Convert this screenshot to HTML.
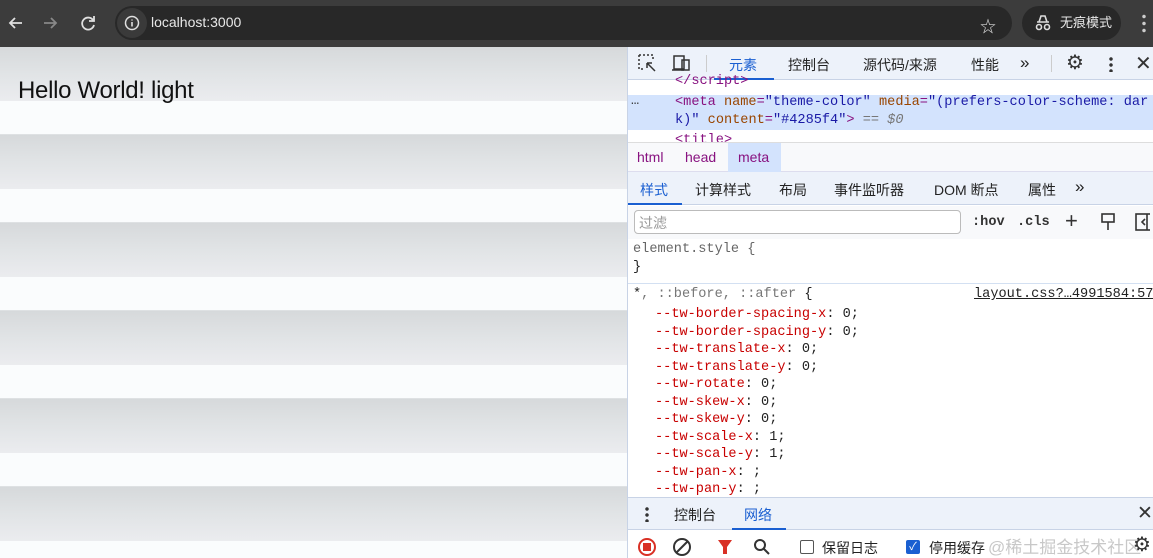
<!DOCTYPE html>
<html><head><meta charset="utf-8"><style>
*{margin:0;padding:0;box-sizing:border-box}
body{width:1153px;height:558px;overflow:hidden;position:relative;font-family:"Liberation Sans","Noto Sans CJK SC",sans-serif;background:#fff}
.abs{position:absolute}
.top{left:0;top:0;width:1153px;height:47px;background:#3c3c3c}
.addr{left:115px;top:6px;width:897px;height:34px;border-radius:17px;background:#282828}
.pill{left:1022px;top:6px;width:99px;height:34px;border-radius:17px;background:#282828;color:#e8e8e8;font-size:13px;line-height:34px;padding-left:38px}
.page{left:0;top:47px;width:627px;height:511px;background:repeating-linear-gradient(to bottom,#d6d9db 0px,#e0e3e5 25px,#ebecef 54px,#fafcfd 54px,#fafcfd 87px,#e6e8ea 87px,#d6d9db 88px)}
.dt{left:627px;top:47px;width:526px;height:511px;background:#fff;border-left:1px solid #c8d3e6}
.mono{font-family:"Liberation Mono",monospace;font-size:13.6px}
.tabbar{background:#edf2fa;}
.cn{font-size:14px;color:#222}
.code{left:655px;color:#c80000}
.code b{font-weight:normal;color:#222}
</style></head><body>
<div class="abs top"></div>
<svg class="abs" style="left:6px;top:14px" width="100" height="20" fill="none" stroke-width="1.8">
<path d="M16 9H4M9 4L4 9l5 5" stroke="#e0e0e0"/>
<path d="M38 9h12M45 4l5 5-5 5" stroke="#888"/>
<path d="M87 6a6 6 0 1 0 1 5M88 2v5h-5" stroke="#e0e0e0"/>
</svg>
<div class="abs addr"></div>
<div class="abs" style="left:117px;top:8px;width:30px;height:30px;border-radius:15px;background:#3a3a3a"></div>
<svg class="abs" style="left:124px;top:15px" width="16" height="16"><circle cx="8" cy="8" r="6.5" fill="none" stroke="#e0e0e0" stroke-width="1.5"/><path d="M8 7v4.5M8 4.5v1" stroke="#e0e0e0" stroke-width="1.6"/></svg>
<div class="abs" style="left:151px;top:14px;color:#e8e8e8;font-size:14px">localhost:3000</div>
<div class="abs" style="left:980px;top:13px;color:#ddd;font-size:16px">☆</div>
<div class="abs pill">无痕模式</div>
<svg class="abs" style="left:1033px;top:14px" width="20" height="18"><path d="M4 8h12M6 8l2-6h4l2 6" stroke="#ddd" stroke-width="1.6" fill="none"/><circle cx="6" cy="13" r="2.5" stroke="#ddd" stroke-width="1.6" fill="none"/><circle cx="14" cy="13" r="2.5" stroke="#ddd" stroke-width="1.6" fill="none"/></svg>
<div class="abs" style="left:1142px;top:13px;width:4px;height:20px;background:radial-gradient(circle,#ccc 1.5px,transparent 2px) 0 0/4px 7px"></div>

<div class="abs page"></div>
<div class="abs" style="left:18px;top:77px;font-size:24px;color:#111;letter-spacing:-0.3px">Hello World! light</div>

<div class="abs dt">
 <div class="abs tabbar" style="left:0;top:0;width:526px;height:33px;border-bottom:1px solid #c8d3e6"></div>
 <svg class="abs" style="left:10px;top:7px" width="60" height="20" fill="none" stroke="#333" stroke-width="1.5">
  <path d="M1 1h14v6M1 1v14h6" stroke-dasharray="2 2"/><path d="M9 9l8 8M9 9h5M9 9v5"/>
  <rect x="36" y="2" width="10" height="13"/><rect x="44" y="6" width="7" height="10"/><path d="M34 16h12"/>
 </svg>
 <div class="abs" style="left:78px;top:8px;width:1px;height:17px;background:#ccc"></div>
 <div class="abs cn" style="left:101px;top:8px;color:#1a5fd1">元素</div>
 <div class="abs" style="left:86px;top:31px;width:60px;height:2px;background:#1a5fd1"></div>
 <div class="abs cn" style="left:160px;top:8px">控制台</div>
 <div class="abs cn" style="left:235px;top:8px">源代码/来源</div>
 <div class="abs cn" style="left:343px;top:8px">性能</div>
 <div class="abs cn" style="left:392px;top:6px;font-size:17px">»</div>
 <div class="abs" style="left:423px;top:8px;width:1px;height:17px;background:#ccc"></div>
 <div class="abs" style="left:438px;top:3px;font-size:20px;color:#333">⚙</div>
 <div class="abs" style="left:481px;top:9px;width:4px;height:16px;background:radial-gradient(circle,#333 1.5px,transparent 2px) 0 0/4px 6px"></div>
 <div class="abs" style="left:507px;top:4px;font-size:20px;color:#333">✕</div>

 <div class="abs mono" style="left:47px;top:27px;color:#881280">&lt;/script&gt;</div>
 <div class="abs" style="left:0;top:48px;width:526px;height:35px;background:#d3e3fd"></div>
 <div class="abs mono" style="left:3px;top:47px;color:#333">…</div>
 <div class="abs mono" style="left:47px;top:47px;color:#881280;line-height:18px;white-space:pre">&lt;meta <span style="color:#994500">name</span>=<span style="color:#1a1aa6">"theme-color"</span> <span style="color:#994500">media</span>=<span style="color:#1a1aa6">"(prefers-color-scheme: dar
k)"</span> <span style="color:#994500">content</span>=<span style="color:#1a1aa6">"#4285f4"</span>&gt; <span style="color:#777">== <i>$0</i></span></div>
 <div class="abs mono" style="left:47px;top:86px;color:#881280;height:9px;overflow:hidden">&lt;title&gt;</div>
 <div class="abs" style="left:0;top:95px;width:526px;height:1px;background:#ddd"></div>
 <div class="abs" style="left:0;top:96px;width:526px;height:29px;background:#f8f9fb;border-bottom:1px solid #dde"></div>
 <div class="abs" style="left:100px;top:96px;width:53px;height:29px;background:#d3e3fd"></div>
 <div class="abs cn" style="left:9px;top:102px;color:#881280">html</div>
 <div class="abs cn" style="left:57px;top:102px;color:#881280">head</div>
 <div class="abs cn" style="left:110px;top:102px;color:#881280">meta</div>
 <div class="abs tabbar" style="left:0;top:125px;width:526px;height:33px;border-bottom:1px solid #c8d3e6"></div>
 <div class="abs cn" style="left:12px;top:133px;color:#1a5fd1">样式</div>
 <div class="abs" style="left:0;top:156px;width:54px;height:2px;background:#1a5fd1"></div>
 <div class="abs cn" style="left:67px;top:133px">计算样式</div>
 <div class="abs cn" style="left:151px;top:133px">布局</div>
 <div class="abs cn" style="left:206px;top:133px">事件监听器</div>
 <div class="abs cn" style="left:306px;top:133px">DOM 断点</div>
 <div class="abs cn" style="left:400px;top:133px">属性</div>
 <div class="abs cn" style="left:447px;top:130px;font-size:17px">»</div>
 <div class="abs" style="left:0;top:159px;width:526px;height:33px;background:#f8f9fb"></div>
 <div class="abs" style="left:6px;top:163px;width:327px;height:24px;border:1px solid #bbb;border-radius:4px;background:#fff;font-size:14px;color:#999;padding:2px 4px">过滤</div>
 <div class="abs mono" style="left:344px;top:168px;font-weight:bold;color:#333">:hov</div>
 <div class="abs mono" style="left:389px;top:168px;font-weight:bold;color:#333">.cls</div>
 <div class="abs" style="left:437px;top:161px;font-size:22px;color:#333">+</div>
 <svg class="abs" style="left:472px;top:166px" width="50" height="20" fill="none" stroke="#333" stroke-width="1.6"><rect x="2" y="1" width="12" height="8"/><path d="M8 9v8"/><rect x="36" y="1" width="16" height="16"/><path d="M47 1v16M45 6l-3 3 3 3"/></svg>
 <div class="abs mono" style="left:5px;top:195px;color:#666">element.style {</div>
 <div class="abs mono" style="left:5px;top:213px;color:#222">}</div>
 <div class="abs" style="left:0;top:236px;width:526px;height:1px;background:#d3e0f2"></div>
 <div class="abs mono" style="left:5px;top:240px;color:#777"><span style="color:#222">*</span>, ::before, ::after <span style="color:#222">{</span></div>
 <div class="abs mono" style="left:346px;top:240px;color:#222;text-decoration:underline;white-space:nowrap">layout.css?…4991584:57</div>
</div>
<div class="abs mono code" style="top:306px;line-height:17.5px;white-space:pre">--tw-border-spacing-x<b>: 0;</b>
--tw-border-spacing-y<b>: 0;</b>
--tw-translate-x<b>: 0;</b>
--tw-translate-y<b>: 0;</b>
--tw-rotate<b>: 0;</b>
--tw-skew-x<b>: 0;</b>
--tw-skew-y<b>: 0;</b>
--tw-scale-x<b>: 1;</b>
--tw-scale-y<b>: 1;</b>
--tw-pan-x<b>: ;</b>
--tw-pan-y<b>: ;</b></div>
<div class="abs tabbar" style="left:628px;top:497px;width:525px;height:33px;border-top:1px solid #c8d3e6;border-bottom:1px solid #c8d3e6"></div>
<div class="abs" style="left:645px;top:506px;width:4px;height:16px;background:radial-gradient(circle,#333 1.5px,transparent 2px) 0 0/4px 6px"></div>
<div class="abs cn" style="left:674px;top:505px">控制台</div>
<div class="abs cn" style="left:744px;top:505px;color:#1a5fd1">网络</div>
<div class="abs" style="left:732px;top:528px;width:54px;height:2px;background:#1a5fd1"></div>
<div class="abs" style="left:1137px;top:502px;font-size:19px;color:#333">✕</div>
<svg class="abs" style="left:636px;top:537px" width="150" height="20" fill="none" stroke-width="2">
<circle cx="11" cy="10" r="8" stroke="#d93025"/><rect x="7" y="6" width="8" height="8" fill="#d93025" stroke="none"/>
<circle cx="46" cy="10" r="8" stroke="#333"/><path d="M40 16l12-12" stroke="#333"/>
<path d="M82 3h14l-5 7v7h-4v-7z" fill="#d93025" stroke="none"/>
<circle cx="124" cy="8" r="5" stroke="#333"/><path d="M128 12l5 5" stroke="#333"/>
</svg>
<div class="abs" style="left:800px;top:540px;width:14px;height:14px;border:1.5px solid #555;border-radius:2px"></div>
<div class="abs cn" style="left:822px;top:538px">保留日志</div>
<div class="abs" style="left:906px;top:540px;width:14px;height:14px;background:#1a5fd1;border-radius:2px;color:#fff;font-size:11px;line-height:14px;text-align:center">✓</div>
<div class="abs cn" style="left:929px;top:538px">停用缓存</div>
<div class="abs" style="left:988px;top:533px;font-size:17px;color:#c8c8c8">@稀土掘金技术社区</div>
<div class="abs" style="left:1133px;top:532px;font-size:20px;color:#333">⚙</div>
</body></html>
